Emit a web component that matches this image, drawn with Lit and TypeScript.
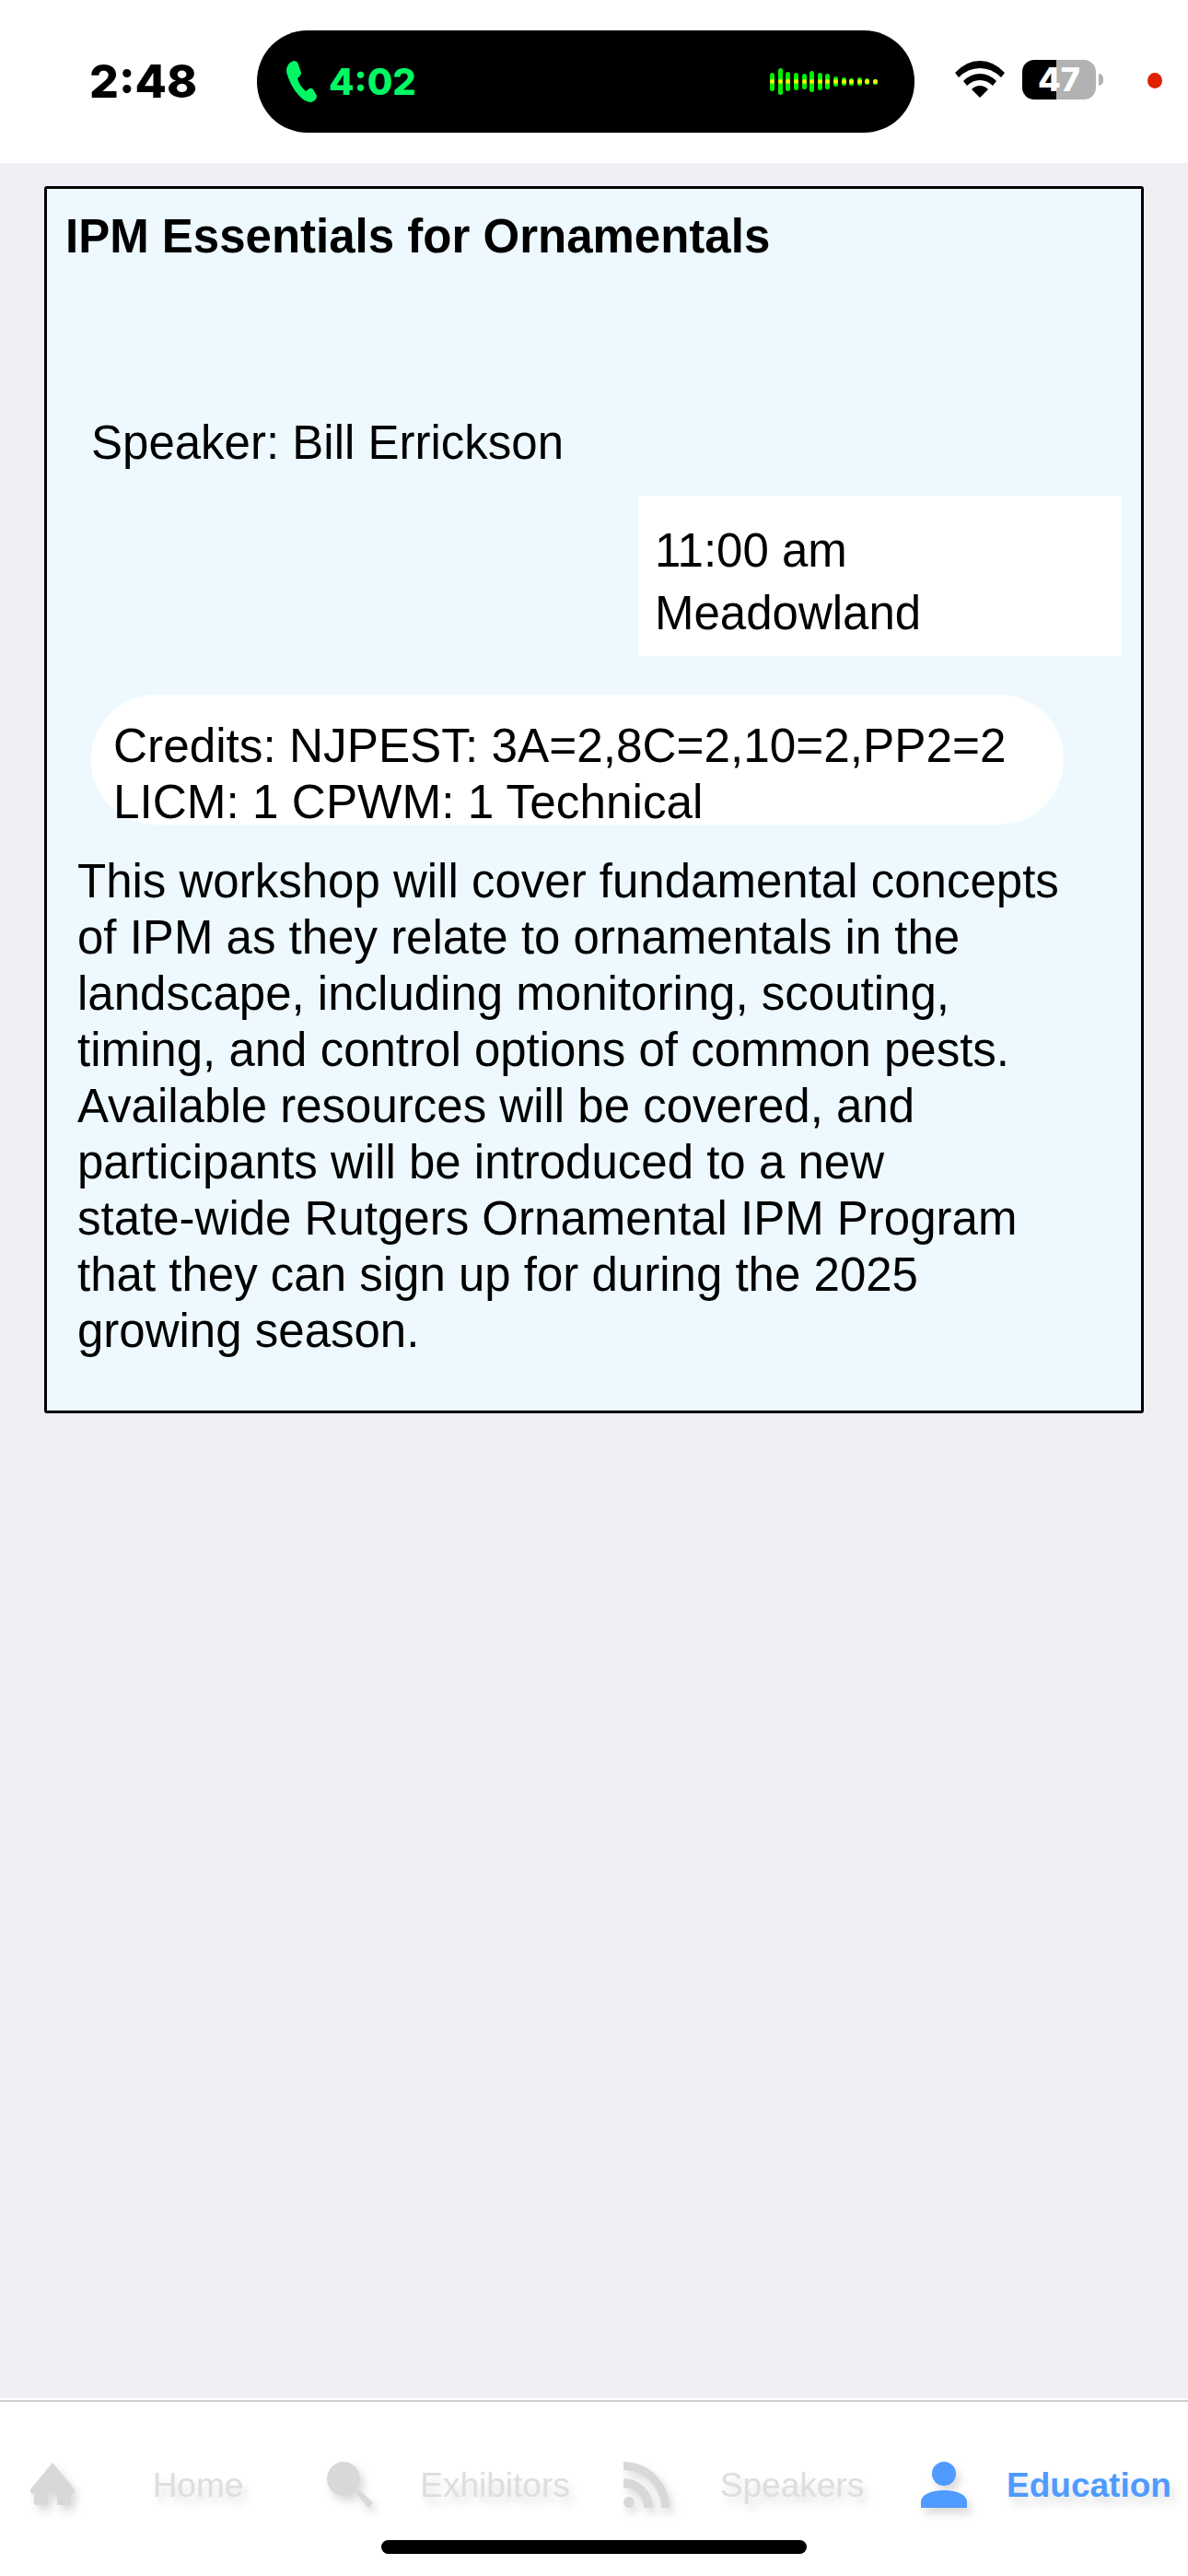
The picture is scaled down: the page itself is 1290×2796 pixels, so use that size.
import { LitElement, css, html, svg } from 'lit';
import { customElement } from 'lit/decorators.js';

// bar heights of the call waveform in the status pill
const WAVE = [20, 29, 21, 19, 17, 23, 19, 17, 11, 9, 8, 9, 7, 6];

const TABS = [
  {
    label: 'Home',
    active: false,
    icon: svg`<path d="M25 1 L49 30 Q50 34 46 35 L45 35 V45 Q45 47 43 47 H30 V33 H20 V47 H7 Q5 47 5 45 V35 L4 35 Q0 34 1 30 Z"/>`,
  },
  {
    label: 'Exhibitors',
    active: false,
    icon: svg`<ellipse cx="18" cy="18.5" rx="18" ry="18.5"/><path d="M30.6 33 L36 31 L50 45 L45 50 Z"/>`,
  },
  {
    label: 'Speakers',
    active: false,
    icon: svg`<circle cx="6" cy="44" r="6"/><path d="M0 18 A32 32 0 0 1 32 50 H22 A22 22 0 0 0 0 28 Z"/><path d="M0 0 A50 50 0 0 1 50 50 H41 A41 41 0 0 0 0 9 Z"/>`,
  },
  {
    label: 'Education',
    active: true,
    icon: svg`<ellipse cx="25" cy="13" rx="13" ry="13"/><path d="M0 50 V44 C0 35 12 31 25 31 C38 31 50 35 50 44 V50 Z"/>`,
  },
];

@customElement('app-root')
export class AppRoot extends LitElement {
  static styles = css`
    :host {
      display: block;
      width: 1290px;
      height: 2796px;
      font-family: 'Liberation Sans', Arial, sans-serif;
      color: #000;
      background: #efeff4;
    }
    .page {
      display: flex;
      flex-direction: column;
      height: 2796px;
    }

    .status {
      height: 177px;
      box-sizing: border-box;
      background: #fff;
      display: flex;
      align-items: flex-start;
    }
    .clock {
      width: 279px;
      box-sizing: border-box;
      padding: 58px 0 0 97px;
      font-family: Inter, 'Liberation Sans', sans-serif;
      font-weight: 800;
      font-size: 50px;
      line-height: 60px;
    }
    .island {
      margin-top: 33px;
      width: 714px;
      height: 111px;
      box-sizing: border-box;
      padding: 0 40px 0 32px;
      border-radius: 55px;
      background: #000;
      display: flex;
      align-items: center;
      color: #00f864;
    }
    .call-time {
      margin-left: 13px;
      font-family: Inter, 'Liberation Sans', sans-serif;
      font-weight: 800;
      font-size: 40px;
      line-height: 50px;
      flex: 1;
    }
    .wave {
      display: flex;
      align-items: center;
      gap: 3.6px;
    }
    .wave i {
      display: flex;
      align-items: center;
      justify-content: center;
      width: 5px;
      border-radius: 3px;
      background: #00f000;
    }
    .wave i::after {
      content: '';
      width: 5px;
      height: 5px;
      border-radius: 50%;
      background: #f4f000;
    }
    .wifi {
      margin: 66px 0 0 44px;
    }
    .battery {
      margin: 65px 0 0 19px;
      width: 80px;
      height: 43px;
      border-radius: 13px;
      background: linear-gradient(90deg, #000 0 37px, #b2b2b2 37px);
      color: #fff;
      font-family: Inter, 'Liberation Sans', sans-serif;
      font-weight: 800;
      font-size: 36px;
      line-height: 43px;
      text-align: center;
      white-space: nowrap;
    }
    .nub {
      margin: 80px 0 0 3px;
      width: 5px;
      height: 13px;
      border-radius: 0 7px 7px 0;
      background: #b2b2b2;
    }
    .rec {
      margin: 79px 0 0 48px;
      width: 16px;
      height: 17px;
      border-radius: 50%;
      background: #e02000;
    }

    .content {
      flex: 1;
      padding: 25px 48px 0;
    }
    .card {
      box-sizing: border-box;
      height: 1332px;
      border: 3px solid #000;
      border-radius: 3px;
      background: #edf9ff;
      padding: 21px 20px 0 20px;
      font-size: 51px;
    }
    .title {
      margin: 0;
      font-size: 51px;
      line-height: 62px;
      font-weight: 700;
    }
    .speaker {
      margin: 162px 0 0 28px;
      line-height: 62px;
    }
    .where {
      margin: 26px 0 0 622px;
      box-sizing: border-box;
      width: 525px;
      height: 174px;
      padding: 26px 18px 0;
      background: #fff;
      line-height: 68px;
    }
    .credits {
      margin: 42px 0 0 28px;
      box-sizing: border-box;
      width: 1056px;
      height: 141px;
      padding: 25px 24px 0;
      border-radius: 70px;
      background: #fff;
      font-size: 51.3px;
      line-height: 61px;
      white-space: nowrap;
    }
    .about {
      margin: 31px 0 0 13px;
      width: 1080px;
      line-height: 61px;
    }
    .about span {
      white-space: nowrap;
    }

    .tabbar {
      height: 191px;
      box-sizing: border-box;
      border-top: 2px solid #ccc;
      box-shadow: 0 -2px 0 #fff;
      background: #fff;
      position: relative;
      display: grid;
      grid-template-columns: repeat(4, 322.5px);
      padding-top: 65px;
    }
    .tab {
      display: grid;
      grid-template-columns: 107.5px 215px;
      align-items: start;
      color: #dedede;
    }
    .tab svg {
      display: block;
      margin-left: 32px;
      fill: #d8d8d8;
      filter: drop-shadow(4px 6px 5px rgba(0, 0, 0, 0.15));
    }
    .tab span {
      text-align: center;
      white-space: nowrap;
      font-size: 37px;
      line-height: 50px;
      margin-top: 1px;
      text-shadow: 5px 8px 10px rgba(0, 0, 0, 0.13);
    }
    .tab.on {
      color: #4f9bff;
    }
    .tab.on svg {
      fill: #4f9bff;
    }
    .tab.on span {
      font-weight: 700;
    }
    .home-bar {
      position: absolute;
      left: 414px;
      top: 150px;
      width: 462px;
      height: 15px;
      border-radius: 8px;
      background: #000;
    }
  `;

  render() {
    return html`
      <div class="page">
        <div class="status">
          <div class="clock">2:48</div>
          <div class="island">
            <svg width="33" height="45" viewBox="0 0 33 45" fill="#00f864">
              <path d="M8 0 Q12 0 13 4 L16 13 Q16 16 12 19 Q14 27 21 33 L25 30 Q27 29 29 31 L33 38 Q33 43 27 45 Q20 45 13 37 Q4 27 0 12 Q0 2 8 0 Z"/>
            </svg>
            <div class="call-time">4:02</div>
            <div class="wave">
              ${WAVE.map((h) => html`<i style="height:${h}px"></i>`)}
            </div>
          </div>
          <svg class="wifi" width="54" height="40" viewBox="0 0 54 40" fill="#000">
            <path d="M27 0 Q42 0 54 13 L50 18 Q40 8 27 8 Q14 8 4 18 L0 13 Q12 0 27 0 Z"/>
            <path d="M27 14 Q37 14 45 22 L41 27 Q35 21 27 21 Q19 21 13 27 L9 22 Q17 14 27 14 Z"/>
            <path d="M27 27 Q32 27 36 31 L27 40 L18 31 Q22 27 27 27 Z"/>
          </svg>
          <div class="battery">47</div>
          <div class="nub"></div>
          <div class="rec"></div>
        </div>

        <div class="content">
          <div class="card">
            <h1 class="title">IPM Essentials for Ornamentals</h1>
            <div class="speaker">Speaker: Bill Errickson</div>
            <div class="where">11:00 am<br />Meadowland</div>
            <div class="credits">Credits: NJPEST: 3A=2,8C=2,10=2,PP2=2<br />LICM: 1 CPWM: 1 Technical</div>
            <div class="about">
              This workshop will cover fundamental concepts of IPM as they relate to ornamentals in the landscape, including monitoring, scouting, timing, and control options of common pests. Available resources will be covered, and participants will be introduced to a new <span>state-wide</span> Rutgers Ornamental IPM Program that they can sign up for during the 2025 growing season.
            </div>
          </div>
        </div>

        <div class="tabbar">
          ${TABS.map(
            (t) => html`
              <div class="tab ${t.active ? 'on' : ''}">
                <svg width="50" height="50" viewBox="0 0 50 50">${t.icon}</svg>
                <span>${t.label}</span>
              </div>
            `
          )}
          <div class="home-bar"></div>
        </div>
      </div>
    `;
  }
}
